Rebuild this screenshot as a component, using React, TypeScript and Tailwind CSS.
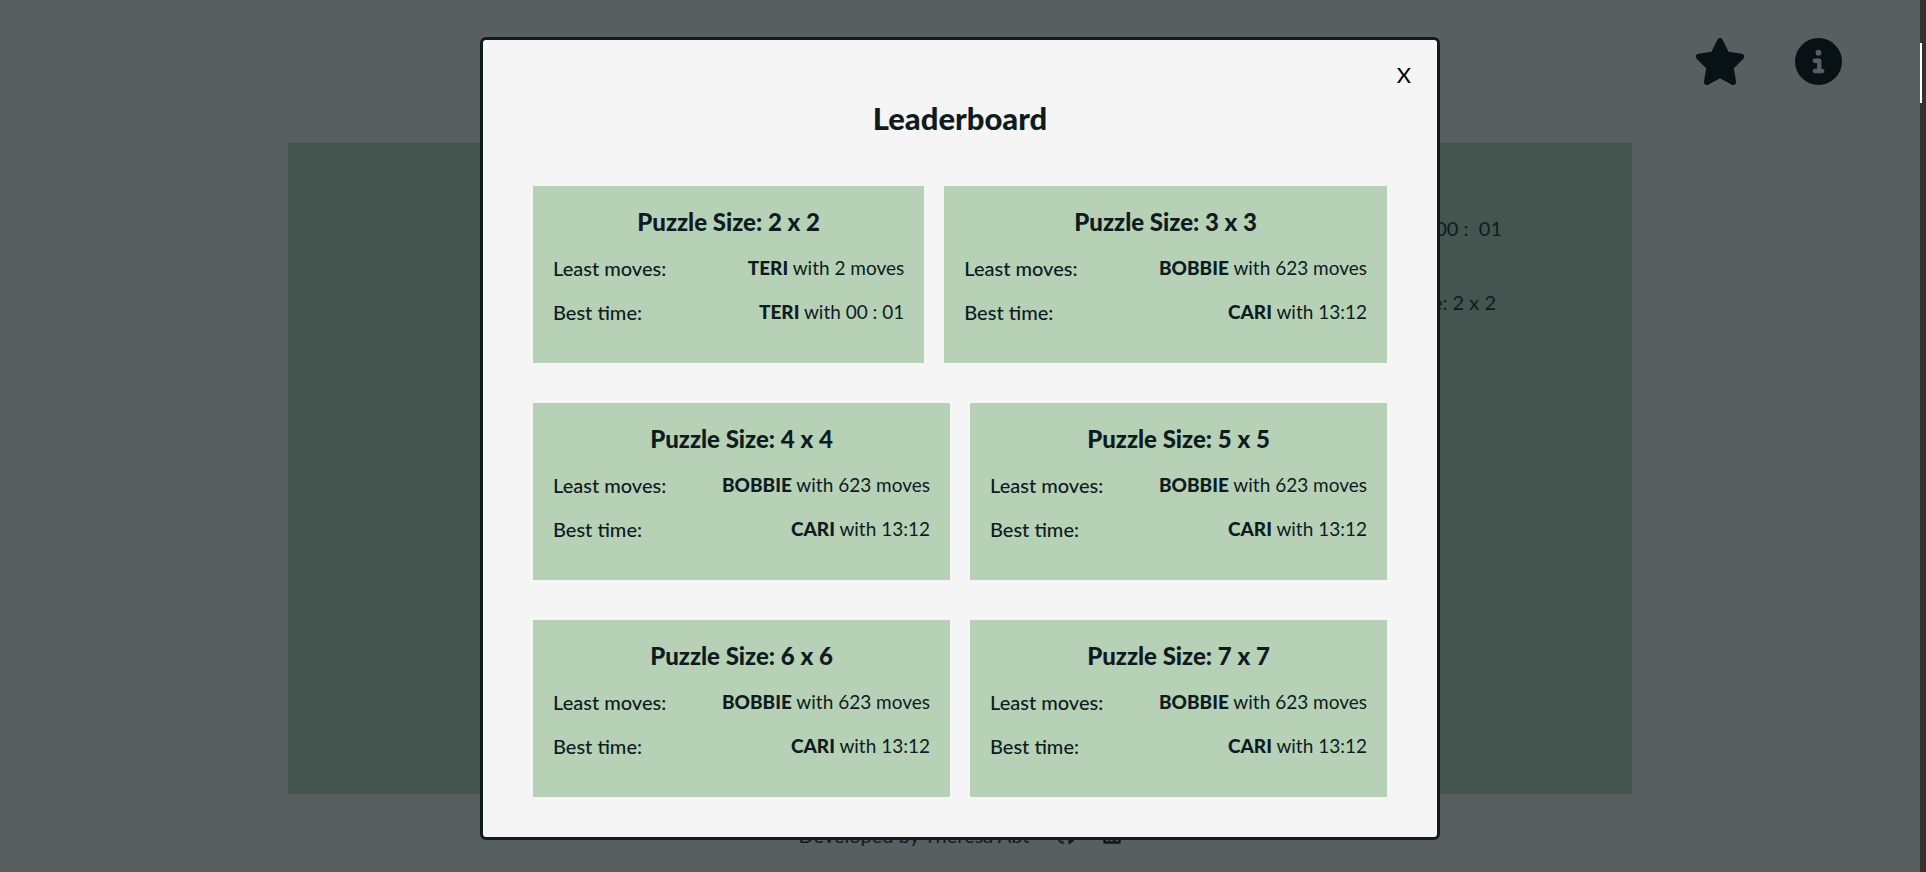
import React from "react";
import { FaStar, FaCircleInfo, FaGithub, FaLinkedin } from "react-icons/fa6";

type Entry = { size: number; movesBy: string; moves: number; timeBy: string; time: string };

const rows: Entry[][] = [
  [
    { size: 2, movesBy: "TERI", moves: 2, timeBy: "TERI", time: "00 : 01" },
    { size: 3, movesBy: "BOBBIE", moves: 623, timeBy: "CARI", time: "13:12" },
  ],
  [
    { size: 4, movesBy: "BOBBIE", moves: 623, timeBy: "CARI", time: "13:12" },
    { size: 5, movesBy: "BOBBIE", moves: 623, timeBy: "CARI", time: "13:12" },
  ],
  [
    { size: 6, movesBy: "BOBBIE", moves: 623, timeBy: "CARI", time: "13:12" },
    { size: 7, movesBy: "BOBBIE", moves: 623, timeBy: "CARI", time: "13:12" },
  ],
];

function Row({ label, name, value }: { label: string; name: string; value: string }) {
  return (
    <div className="flex h-11 items-center justify-between gap-10 whitespace-nowrap">
      <dt className="text-xl font-medium">{label}</dt>
      <dd className="text-[19px] font-normal">
        <strong className="font-black">{name}</strong> with {value}
      </dd>
    </div>
  );
}

function Card({ entry }: { entry: Entry }) {
  return (
    <article className="flex-auto bg-[#b7d1b7] px-5 pt-5 pb-[29px]">
      <h3 className="mb-2 text-center text-2xl leading-8 font-black">
        Puzzle Size: {entry.size} x {entry.size}
      </h3>
      <dl>
        <Row label="Least moves:" name={entry.movesBy} value={`${entry.moves} moves`} />
        <Row label="Best time:" name={entry.timeBy} value={entry.time} />
      </dl>
    </article>
  );
}

export default function App() {
  return (
    <div className="relative flex min-h-screen bg-[#575f61] font-['Lato','Liberation_Sans',sans-serif] text-[#0e1c1f]">
      <div className="flex flex-1 flex-col">
        <header className="flex justify-end gap-12 pt-[38px] pr-[78px] pb-[58px] text-[#081214]">
          <button type="button" aria-label="Leaderboard">
            <FaStar className="h-[47px] w-[54px]" />
          </button>
          <button type="button" aria-label="Information">
            <FaCircleInfo className="size-[47px]" />
          </button>
        </header>
        <main className="mx-[15%] flex h-[651px] justify-end bg-[#44544e] pt-[70px] pr-[130px] text-xl">
          <div className="flex flex-col items-end gap-11 leading-[30px]">
            <p className="whitespace-pre">Time: 00 :  01</p>
            <p className="pr-1.5">Size: 2 x 2</p>
          </div>
        </main>
        <footer className="flex items-center justify-center gap-[26px] pt-[26px] text-xl leading-[30px]">
          <p>Developed by Theresa Abt</p>
          <a href="#github" aria-label="GitHub">
            <FaGithub />
          </a>
          <a href="#linkedin" aria-label="LinkedIn">
            <FaLinkedin />
          </a>
        </footer>
      </div>

      <div className="w-1.5 bg-[#333333] pt-[43px]">
        <div className="h-[60px] w-0.5 bg-white" />
      </div>

      <div className="absolute inset-0 flex items-start justify-center pt-[37px] pr-1.5">
        <section
          role="dialog"
          aria-labelledby="leaderboard-title"
          className="w-1/2 rounded-md border-3 border-[#0e1c1f] bg-[#f5f5f5] px-[50px] pt-5 pb-10"
        >
          <div className="-mr-7 flex justify-end">
            <button type="button" aria-label="Close" className="px-1 text-[22px] leading-[30px] font-normal text-black">
              X
            </button>
          </div>
          <h2 id="leaderboard-title" className="mb-10 text-center text-[31px] leading-[56px] font-black">
            Leaderboard
          </h2>
          <div className="flex flex-col gap-10">
            {rows.map((pair) => (
              <div key={pair[0].size} className="flex gap-5">
                {pair.map((entry) => (
                  <Card key={entry.size} entry={entry} />
                ))}
              </div>
            ))}
          </div>
        </section>
      </div>
    </div>
  );
}
